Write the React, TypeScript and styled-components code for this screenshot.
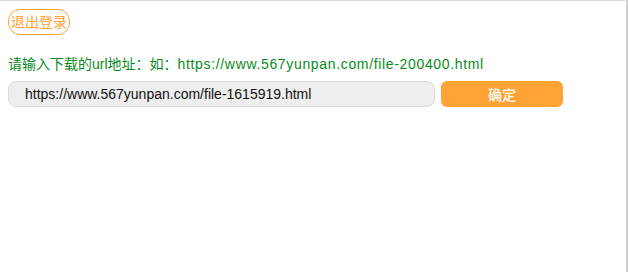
import React, { useState } from 'react';
import styled, { createGlobalStyle } from 'styled-components';

const GlobalStyle = createGlobalStyle`
  html, body {
    margin: 0;
    padding: 0;
    background: #fff;
  }
  body {
    font-family: 'Liberation Sans', 'Noto Sans CJK SC', sans-serif;
  }
`;

const Frame = styled.div`
  box-sizing: border-box;
  height: 100vh;
  border-top: 1px solid #dcdcdc;
  border-right: 2px solid #d0d0d0;
  padding: 8px;
`;

const LogoutButton = styled.button`
  box-sizing: border-box;
  height: 26px;
  padding: 0 2px;
  border: 1px solid #ffa033;
  border-radius: 12px;
  background: #fff;
  color: #ffa033;
  font-family: inherit;
  font-size: 14px;
  line-height: 23px;
  cursor: pointer;
`;

const Label = styled.p`
  margin: 20px 0 0;
  color: #0a8a1c;
  font-size: 14px;
  line-height: 18px;
`;

// the example link is set a little wider, as in the original font
const Example = styled.span`
  letter-spacing: 0.66px;
`;

const Row = styled.div`
  display: flex;
  gap: 6px;
  margin-top: 8px;
`;

const UrlInput = styled.input`
  box-sizing: border-box;
  width: 427px;
  height: 26px;
  padding: 0 16px;
  border: 1px solid #dadada;
  border-radius: 8px;
  background: #eeeeee;
  color: #111;
  font-family: inherit;
  font-size: 14px;
  outline: none;
`;

const SubmitButton = styled.button`
  width: 122px;
  height: 26px;
  border: none;
  border-radius: 6px;
  background: #ffa336;
  color: #fff;
  font-family: inherit;
  font-size: 14px;
  font-weight: 500;
  cursor: pointer;
`;

const App: React.FC = () => {
  const [url, setUrl] = useState('https://www.567yunpan.com/file-1615919.html');

  return (
    <>
      <GlobalStyle />
      <Frame>
        <LogoutButton>退出登录</LogoutButton>
        <Label>
          请输入下载的url地址：如：<Example>https://www.567yunpan.com/file-200400.html</Example>
        </Label>
        <Row>
          <UrlInput value={url} onChange={(e) => setUrl(e.target.value)} />
          <SubmitButton>确定</SubmitButton>
        </Row>
      </Frame>
    </>
  );
};

export default App;
